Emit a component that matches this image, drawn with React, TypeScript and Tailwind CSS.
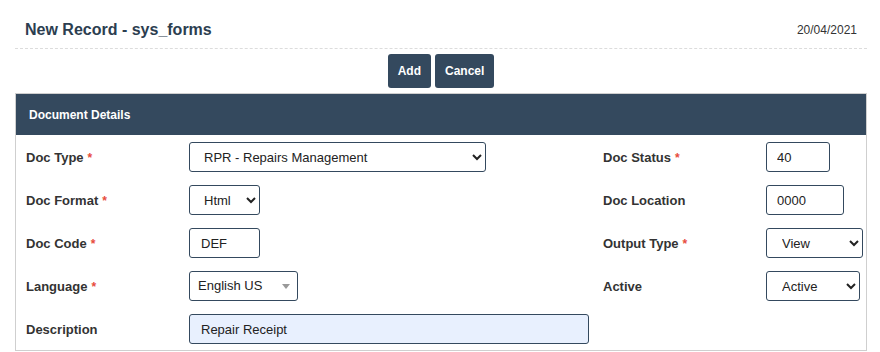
export default function App() {
  const req = <span className="ml-[4px] text-[12px] text-[#e74c3c]">*</span>;
  const label = "flex h-[30px] items-center pt-[2px] text-[13px] font-bold text-[#333]";
  const box = "h-[30px] rounded-[3px] border border-[#34495e] text-[13px] text-[#222]";

  return (
    <div className="min-h-[352px] bg-white pl-[15px] pr-[13px] font-['Liberation_Sans',Arial,sans-serif]">
      <div className="flex h-[49px] items-center justify-between border-b border-dashed border-[#dcdcdc] px-[10px] pt-[12px]">
        <h1 className="text-[16px] font-bold text-[#2c3e50]">New Record - sys_forms</h1>
        <span className="text-[12px] text-[#333]">20/04/2021</span>
      </div>

      <div className="mt-[5px] flex justify-center gap-[4px]">
        <button className="h-[34px] rounded-[3px] bg-[#34495e] px-[10px] text-[12px] font-bold text-white">
          Add
        </button>
        <button className="h-[34px] rounded-[3px] bg-[#34495e] px-[10px] text-[12px] font-bold text-white">
          Cancel
        </button>
      </div>

      <div className="mt-[5px] border border-[#cfcfcf]">
        <div className="flex h-[41px] items-center bg-[#34495e] px-[13px] text-[12px] font-bold text-white">
          Document Details
        </div>

        <div className="grid grid-cols-[163px_414px_163px_1fr] items-start gap-y-[13px] pb-[6px] pl-[10px] pt-[7px]">
          <div className={label}>Doc Type{req}</div>
          <div>
            <select className={`${box} w-[297px] bg-white pl-[10px]`} defaultValue="RPR">
              <option value="RPR">RPR - Repairs Management</option>
            </select>
          </div>
          <div className={label}>Doc Status{req}</div>
          <div>
            <input className={`${box} h-[28px] w-[64px] bg-white px-[10px]`} defaultValue="40" />
          </div>

          <div className={label}>Doc Format{req}</div>
          <div>
            <select className={`${box} w-[71px] bg-white pl-[10px]`} defaultValue="Html">
              <option>Html</option>
            </select>
          </div>
          <div className={label}>Doc Location</div>
          <div>
            <input className={`${box} h-[28px] w-[78px] bg-white px-[10px]`} defaultValue="0000" />
          </div>

          <div className={label}>Doc Code{req}</div>
          <div>
            <input className={`${box} h-[29px] w-[71px] bg-white px-[11px]`} defaultValue="DEF" />
          </div>
          <div className={label}>Output Type{req}</div>
          <div>
            <select className={`${box} w-[97px] bg-white pl-[11px]`} defaultValue="View">
              <option>View</option>
            </select>
          </div>

          <div className={label}>Language{req}</div>
          <div>
            <div className={`${box} flex h-[28px] w-[109px] items-center justify-between bg-white pl-[8px] pr-[7px]`}>
              <span>English US</span>
              <span className="h-0 w-0 border-x-[4px] border-t-[5px] border-x-transparent border-t-[#999]" />
            </div>
          </div>
          <div className={label}>Active</div>
          <div>
            <select className={`${box} w-[94px] bg-white pl-[11px]`} defaultValue="Active">
              <option>Active</option>
            </select>
          </div>

          <div className={label}>Description</div>
          <div className="col-span-3">
            <input
              className={`${box} h-[28px] w-[400px] bg-[#e8f0fe] px-[11px]`}
              defaultValue="Repair Receipt"
            />
          </div>
        </div>
      </div>
    </div>
  );
}
